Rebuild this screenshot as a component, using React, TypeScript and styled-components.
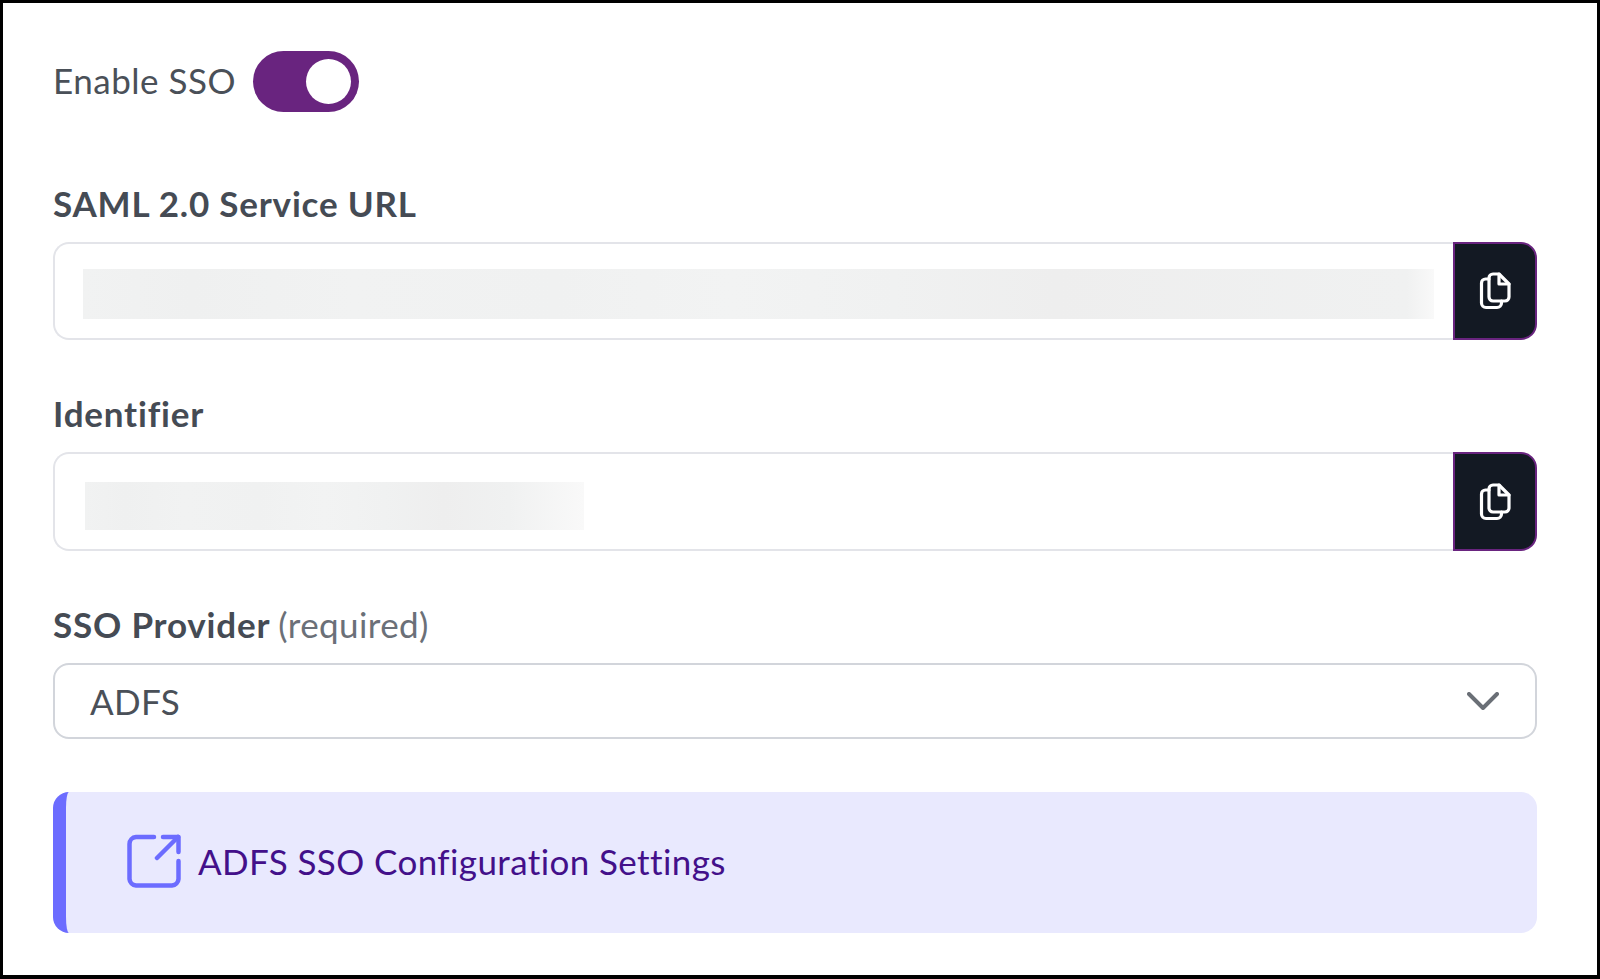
import React from "react";
import styled, { createGlobalStyle } from "styled-components";

const Global = createGlobalStyle`
  html, body { margin: 0; padding: 0; background: #fff; }
  body { font-family: "Lato", "Liberation Sans", sans-serif; }
  * { box-sizing: border-box; }
`;

const Frame = styled.main`
  width: 1600px;
  height: 979px;
  border: 3px solid #000;
  border-bottom-width: 4px;
  padding: 48px 60px 0 50px;
  display: flex;
  flex-direction: column;
  background: #fff;
`;

const ToggleRow = styled.div`
  display: flex;
  align-items: center;
  gap: 17px;
  height: 61px;
`;

const ToggleLabel = styled.span`
  font-size: 35px;
  line-height: 40px;
  padding-bottom: 3px;
  color: #4a5058;
  letter-spacing: 0.5px;
`;

const Switch = styled.div`
  width: 106px;
  height: 61px;
  border-radius: 31px;
  background: #69247f;
  display: flex;
  align-items: center;
  justify-content: flex-end;
  padding-right: 8px;
`;

const Knob = styled.div`
  width: 45px;
  height: 45px;
  border-radius: 50%;
  background: #fff;
`;

const Label = styled.label<{ $top: number }>`
  display: block;
  margin-top: ${(p) => p.$top}px;
  height: 40px;
  line-height: 40px;
  font-size: 35px;
  font-weight: 700;
  color: #454b54;
  letter-spacing: 0.8px;
`;

const Optional = styled.span`
  font-weight: 400;
  color: #6b7078;
  margin-left: 8px;
  letter-spacing: 0.4px;
`;

const Field = styled.div<{ $height: number }>`
  margin-top: 19px;
  display: flex;
  height: ${(p) => p.$height}px;
  border-radius: 16px;
`;

const ValueBox = styled.div<{ $left: number; $top: number; $bottom: number }>`
  flex: 1;
  border: 2px solid #e3e4e9;
  border-right: none;
  border-radius: 16px 0 0 16px;
  padding: ${(p) => p.$top}px 19px ${(p) => p.$bottom}px ${(p) => p.$left}px;
`;

const Redacted = styled.div<{ $width: string; $fade: number }>`
  width: ${(p) => p.$width};
  height: 100%;
  background: linear-gradient(
    90deg,
    #f1f2f2 0%,
    #eff0f0 8%,
    #f1f2f2 20%,
    #f0f1f1 35%,
    #f2f3f3 48%,
    #f0f1f1 60%,
    #eeeeee 72%,
    #f0f1f1 ${(p) => p.$fade}%,
    #f9f9f9 100%
  );
`;

const CopyButton = styled.button`
  width: 84px;
  border: 2px solid #69247f;
  border-radius: 0 16px 16px 0;
  background: #131923;
  display: flex;
  align-items: center;
  justify-content: center;
  padding: 0;
`;

const Select = styled.div`
  margin-top: 19px;
  height: 76px;
  border: 2px solid #d2d5db;
  border-radius: 16px;
  display: flex;
  align-items: center;
  justify-content: space-between;
  padding: 0 36px 0 35px;
`;

const SelectValue = styled.span`
  font-size: 35px;
  color: #4a5058;
  letter-spacing: 0.4px;
`;

const Banner = styled.a`
  margin-top: 53px;
  height: 141px;
  border-radius: 16px;
  border-left: 13px solid #6c6cff;
  background: #e9e9fe;
  display: flex;
  align-items: center;
  gap: 17px;
  padding: 0 0 3px 61px;
`;

const BannerText = styled.span`
  font-size: 35px;
  color: #43108a;
  letter-spacing: 0.4px;
`;

const CopyIcon = () => (
  <svg width="32" height="38" viewBox="0 0 32 38" fill="none" stroke="#fff" strokeWidth="3.200" strokeLinejoin="round" strokeLinecap="round">
    <path d="M10 7H6.500A4 4 0 0 0 2.500 11V31A4.500 4.500 0 0 0 7 35.500H18A4.500 4.500 0 0 0 22.500 31V29" />
    <path d="M14 2H20L30 12V25A4 4 0 0 1 26 29H14A4 4 0 0 1 10 25V6A4 4 0 0 1 14 2Z" />
    <path d="M20 2V12H30" />
  </svg>
);

const Chevron = () => (
  <svg width="32" height="18" viewBox="0 0 32 18" fill="none" stroke="#6a6f76" strokeWidth="4" strokeLinecap="round" strokeLinejoin="round">
    <path d="M2 2L16 16L30 2" />
  </svg>
);

const ExternalIcon = () => (
  <svg width="54" height="54" viewBox="0 0 54 54" fill="none" stroke="#6c6cff" strokeWidth="4.500" strokeLinecap="round" strokeLinejoin="round">
    <path d="M27 3H9A7 7 0 0 0 2.500 10V45A7 7 0 0 0 9 51.500H45A7 7 0 0 0 51.500 45V27" />
    <path d="M30 24L51 3" />
    <path d="M36 3H51.500V18" />
  </svg>
);

export default function App() {
  return (
    <>
      <Global />
      <Frame>
        <ToggleRow>
          <ToggleLabel>Enable SSO</ToggleLabel>
          <Switch><Knob /></Switch>
        </ToggleRow>

        <Label $top={71}>SAML 2.0 Service URL</Label>
        <Field $height={98}>
          <ValueBox $left={28} $top={25} $bottom={19}><Redacted $width="100%" $fade={98} /></ValueBox>
          <CopyButton aria-label="Copy"><CopyIcon /></CopyButton>
        </Field>

        <Label $top={53}>Identifier</Label>
        <Field $height={99}>
          <ValueBox $left={30} $top={28} $bottom={19}><Redacted $width="499px" $fade={85} /></ValueBox>
          <CopyButton aria-label="Copy"><CopyIcon /></CopyButton>
        </Field>

        <Label $top={53}>SSO Provider<Optional>(required)</Optional></Label>
        <Select>
          <SelectValue>ADFS</SelectValue>
          <Chevron />
        </Select>

        <Banner>
          <ExternalIcon />
          <BannerText>ADFS SSO Configuration Settings</BannerText>
        </Banner>
      </Frame>
    </>
  );
}
